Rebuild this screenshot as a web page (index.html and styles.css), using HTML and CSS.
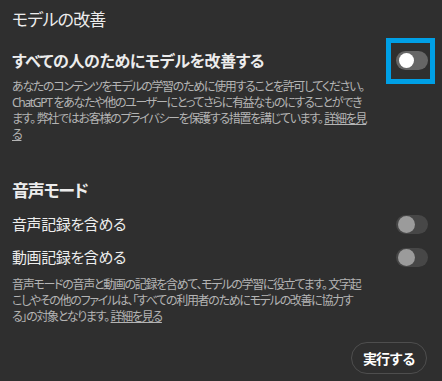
FILE: index.html
```html
<!DOCTYPE html>
<html lang="ja">
<head>
    <meta charset="UTF-8">
    <meta name="viewport" content="width=device-width, initial-scale=1.0">
    <title>データコントロール</title>
<link rel="stylesheet" href="styles.css">
</head>
<body>
    <div class="panel">
        <!-- モデルの改善 -->
        <h2 class="section-title">モデルの改善</h2>
        <div class="row row-main">
            <span class="label label-strong">すべての人のためにモデルを改善する</span>
            <button class="switch-btn"><span class="switch on"></span></button>
        </div>
        <p class="desc">あなたのコンテンツをモデルの学習のために使用することを許可してください。 ChatGPT をあなたや他のユーザーにとってさらに有益なものにすることができます。 弊社ではお客様のプライバシーを保護する措置を講じています。 <a href="#">詳細を見る</a></p>

        <!-- 音声モード -->
        <h2 class="section-title voice">音声モード</h2>
        <div class="row">
            <span class="label">音声記録を含める</span>
            <span class="switch off"></span>
        </div>
        <div class="row">
            <span class="label">動画記録を含める</span>
            <span class="switch off"></span>
        </div>
        <p class="desc desc-voice">音声モードの音声と動画の記録を含めて、モデルの学習に役立てます。 文字起こしやその他のファイルは、「すべての利用者のためにモデルの改善に協力する」の対象となります。 <a href="#">詳細を見る</a></p>

        <div class="actions">
            <button class="run">実行する</button>
        </div>
    </div>
</body>
</html>
```

FILE: styles.css
```css
html, body {
    margin: 0;
    background-color: #2f2f2f;
}

body {
    font-family: "Noto Sans", "Noto Sans CJK JP", sans-serif;
    color: #ececec;
    font-feature-settings: "palt";
}

.panel {
    width: 442px;
    height: 381px;
    box-sizing: border-box;
    padding: 8px 14px 0 12px;
}

.section-title {
    margin: 0;
    font-size: 17px;
    line-height: 24px;
    font-weight: 400;
    letter-spacing: -0.8px;
}

.section-title.voice {
    font-weight: 700;
    margin-top: 36px;
    letter-spacing: -1.2px;
}

.row {
    display: flex;
    align-items: center;
    justify-content: space-between;
    margin-top: 12px;
}
.row + .row {
    margin-top: 14px;
}

.row-main {
    margin-top: 11px;
}

.label {
    font-size: 15px;
    line-height: 19px;
    letter-spacing: -0.4px;
}
.label-strong {
    font-size: 16px;
    font-weight: 700;
}

/* トグルスイッチ */
.switch-btn {
    width: 39px;
    height: 36px;
    margin-right: -2px;
    padding: 8px 0 0 5px;
    box-sizing: border-box;
    background: none;
    border: none;
    outline: 5px solid #00a0e6;
    display: flex;
    align-items: flex-start;
}

.switch {
    display: inline-block;
    position: relative;
    width: 32px;
    height: 19px;
    border-radius: 10px;
    background-color: #474747;
}
.switch::after {
    content: "";
    position: absolute;
    left: 2px;
    top: 1px;
    width: 17px;
    height: 17px;
    border-radius: 50%;
    background-color: #9b9b9b;
}
.switch.on {
    background-color: #666;
}
.switch.on::after {
    background-color: #fff;
    width: 15px;
    height: 15px;
    top: 2px;
    left: 3px;
}

.desc {
    margin: 0;
    width: 357px;
    font-size: 12px;
    line-height: 16px;
    color: #b4b4b4;
    letter-spacing: -1.3px;
}
.desc a {
    color: #b4b4b4;
}

.desc-voice {
    width: 352px;
    margin-top: 10px;
}

.actions {
    display: flex;
    justify-content: flex-end;
    margin-top: 17px;
    padding-right: 1px;
}

.run {
    height: 32px;
    padding: 0 11px;
    border: 1px solid #4e4e4e;
    border-radius: 16px;
    background: none;
    color: #fff;
    font-family: inherit;
    font-size: 14px;
    font-weight: 700;
    letter-spacing: -1px;
}
```
